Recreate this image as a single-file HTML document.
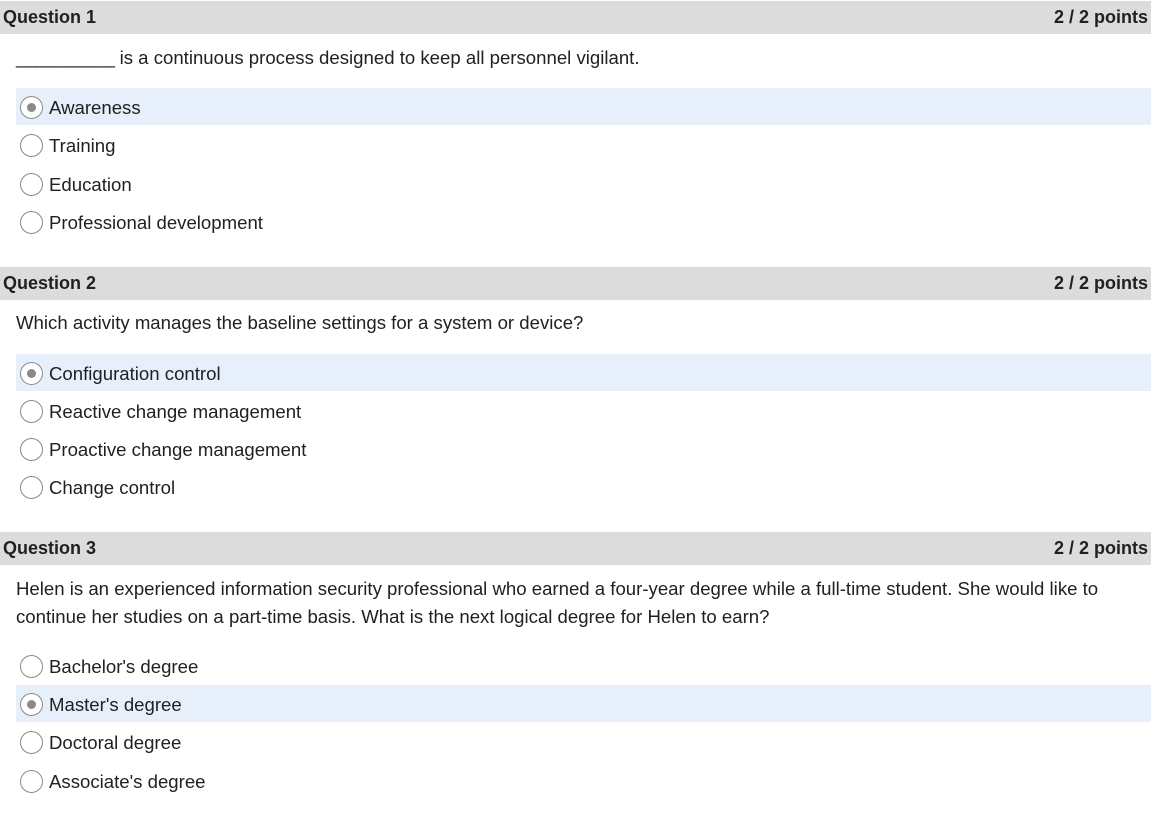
<!DOCTYPE html>
<html><head><style>
body{margin:0;width:1153px;height:813px;background:#fff;font-family:"Liberation Sans",sans-serif;color:#202122;position:relative;overflow:hidden}
.h{position:absolute;left:0;width:1151px;height:33px;background:#dcdcdc;font-weight:bold;font-size:18px;line-height:33px}
.h span{position:absolute;left:3px}
.h b{position:absolute;right:3px}
.t{position:absolute;left:16px;font-size:18.6px;line-height:28px;color:#202122}
.o{position:absolute;left:16px;width:1135px;height:37px;font-size:18.6px;line-height:37px}
.o.s{background:#e7f0fa}
.o i{position:absolute;left:4px;top:8px;width:23px;height:23px;border:1px solid #8a8a8a;border-radius:50%;background:#fff;box-sizing:border-box}
.o.s i::after{content:"";position:absolute;left:6px;top:6px;width:9px;height:9px;border-radius:50%;background:#8a8a8a}
.o span{position:absolute;left:33px;top:1px}
</style></head><body>
<div class="h" style="top:1px"><span>Question 1</span><b>2 / 2 points</b></div>
<div class="t" style="top:44px"><span style="letter-spacing:-0.5px">__________</span> is a continuous process designed to keep all personnel vigilant.</div>
<div class="o s" style="top:88px"><i></i><span>Awareness</span></div>
<div class="o" style="top:126px"><i></i><span>Training</span></div>
<div class="o" style="top:165px"><i></i><span>Education</span></div>
<div class="o" style="top:203px"><i></i><span>Professional development</span></div>

<div class="h" style="top:267px"><span>Question 2</span><b>2 / 2 points</b></div>
<div class="t" style="top:309px">Which activity manages the baseline settings for a system or device?</div>
<div class="o s" style="top:354px"><i></i><span>Configuration control</span></div>
<div class="o" style="top:392px"><i></i><span>Reactive change management</span></div>
<div class="o" style="top:430px"><i></i><span>Proactive change management</span></div>
<div class="o" style="top:468px"><i></i><span>Change control</span></div>

<div class="h" style="top:532px"><span>Question 3</span><b>2 / 2 points</b></div>
<div class="t" style="top:575px;width:1130px">Helen is an experienced information security professional who earned a four-year degree while a full-time student. She would like to<br>continue her studies on a part-time basis. What is the next logical degree for Helen to earn?</div>
<div class="o" style="top:647px"><i></i><span>Bachelor's degree</span></div>
<div class="o s" style="top:685px"><i></i><span>Master's degree</span></div>
<div class="o" style="top:723px"><i></i><span>Doctoral degree</span></div>
<div class="o" style="top:762px"><i></i><span>Associate's degree</span></div>
</body></html>
